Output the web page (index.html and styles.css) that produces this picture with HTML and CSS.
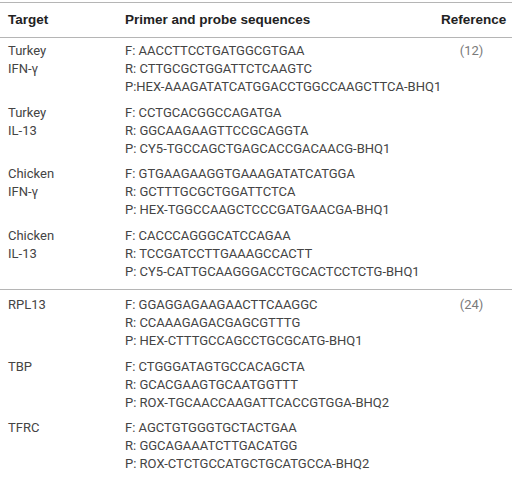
FILE: index.html
```html
<!DOCTYPE html>
<html>
<head>
<meta charset="utf-8">
<link rel="stylesheet" href="styles.css">
</head>
<body>
<table class="primers">
  <thead>
    <tr>
      <th class="col-target">Target</th>
      <th class="col-seq">Primer and probe sequences</th>
      <th class="col-ref">Reference</th>
    </tr>
  </thead>
  <tbody class="targets">
    <tr>
      <td class="col-target">Turkey<br>IFN-γ</td>
      <td class="col-seq">F: AACCTTCCTGATGGCGTGAA<br>R: CTTGCGCTGGATTCTCAAGTC<br>P:HEX-AAAGATATCATGGACCTGGCCAAGCTTCA-BHQ1</td>
      <td class="col-ref">(12)</td>
    </tr>
    <tr>
      <td class="col-target">Turkey<br>IL-13</td>
      <td class="col-seq">F: CCTGCACGGCCAGATGA<br>R: GGCAAGAAGTTCCGCAGGTA<br>P: CY5-TGCCAGCTGAGCACCGACAACG-BHQ1</td>
      <td class="col-ref"></td>
    </tr>
    <tr>
      <td class="col-target">Chicken<br>IFN-γ</td>
      <td class="col-seq">F: GTGAAGAAGGTGAAAGATATCATGGA<br>R: GCTTTGCGCTGGATTCTCA<br>P: HEX-TGGCCAAGCTCCCGATGAACGA-BHQ1</td>
      <td class="col-ref"></td>
    </tr>
    <tr>
      <td class="col-target">Chicken<br>IL-13</td>
      <td class="col-seq">F: CACCCAGGGCATCCAGAA<br>R: TCCGATCCTTGAAAGCCACTT<br>P: CY5-CATTGCAAGGGACCTGCACTCCTCTG-BHQ1</td>
      <td class="col-ref"></td>
    </tr>
  </tbody>
  <tbody class="refgenes">
    <tr>
      <td class="col-target">RPL13</td>
      <td class="col-seq">F: GGAGGAGAAGAACTTCAAGGC<br>R: CCAAAGAGACGAGCGTTTG<br>P: HEX-CTTTGCCAGCCTGCGCATG-BHQ1</td>
      <td class="col-ref">(24)</td>
    </tr>
    <tr>
      <td class="col-target">TBP</td>
      <td class="col-seq">F: CTGGGATAGTGCCACAGCTA<br>R: GCACGAAGTGCAATGGTTT<br>P: ROX-TGCAACCAAGATTCACCGTGGA-BHQ2</td>
      <td class="col-ref"></td>
    </tr>
    <tr>
      <td class="col-target">TFRC</td>
      <td class="col-seq">F: AGCTGTGGGTGCTACTGAA<br>R: GGCAGAAATCTTGACATGG<br>P: ROX-CTCTGCCATGCTGCATGCCA-BHQ2</td>
      <td class="col-ref"></td>
    </tr>
  </tbody>
</table>
</body>
</html>
```

FILE: styles.css
```css
html, body {
  margin: 0;
  padding: 0;
  background: #ffffff;
}

body {
  font-family: Roboto, "Liberation Sans", Arial, sans-serif;
  color: #444;
}

.primers {
  width: 100%;
  margin-top: 2px;
  border-collapse: collapse;
  border-spacing: 0;
  table-layout: fixed;
}

.primers th {
  font-family: "Liberation Sans", Arial, sans-serif;
  font-size: 13.5px;
  font-weight: bold;
  color: #222;
  text-align: left;
  line-height: 18px;
  padding: 8px 0;
  border-top: 1px solid #b5b5b5;
  border-bottom: 1px solid #b5b5b5;
}

.primers td {
  font-size: 13px;
  font-weight: 400;
  line-height: 18px;
  padding: 4px 0 3.5px;
  vertical-align: top;
  white-space: nowrap;
}

.targets tr:last-child td {
  padding-bottom: 8.5px;
}

.refgenes {
  border-top: 1px solid #b5b5b5;
}

.refgenes tr:first-child td {
  padding-top: 6px;
}

.col-target {
  width: 117px;
  padding-left: 8px !important;
}

.col-seq {
  width: 316px;
}

th.col-ref {
  text-align: center;
  padding-right: 6px;
}

td.col-ref {
  text-align: center;
  padding-right: 10px;
  color: #7a7a7a;
}
```
